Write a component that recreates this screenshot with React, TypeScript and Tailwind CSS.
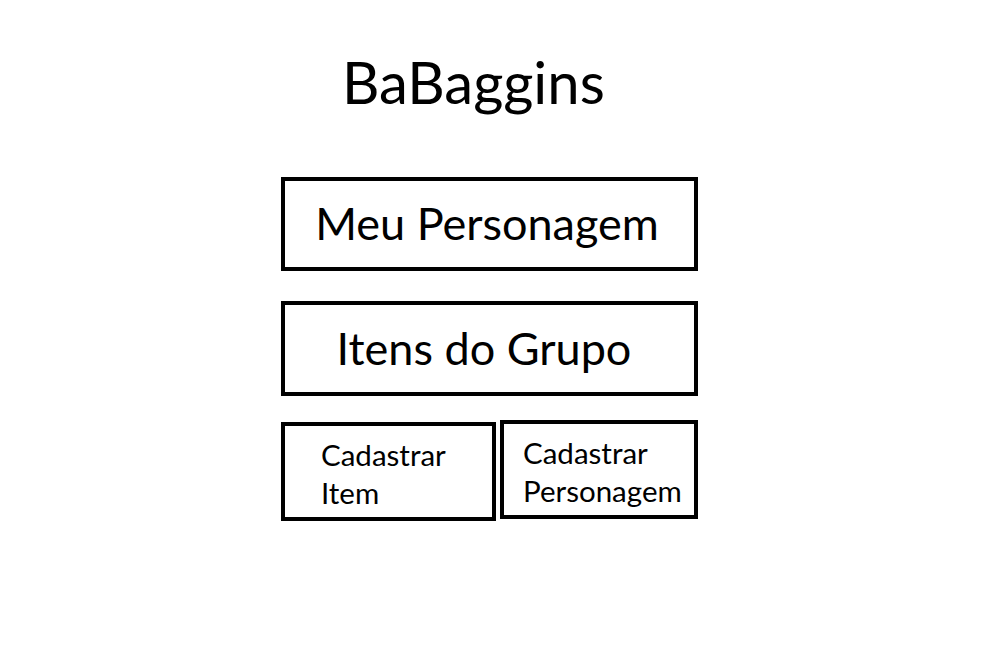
const App = () => {
  return (
    <div className="w-[1008px] h-[651px] bg-white text-black" style={{ fontFamily: 'Lato, "Open Sans", sans-serif' }}>
      <div className="pl-[281px] pt-[50px] w-[698px]">
        <h1 className="text-[58px] leading-[64px] pl-[61px] h-[127px]">BaBaggins</h1>
        <div className="flex flex-col gap-[30px]">
          <button className="w-[417px] h-[94px] border-4 border-black flex items-center justify-center pr-[5px] text-[45px]">
            Meu Personagem
          </button>
          <button className="w-[417px] h-[95px] border-4 border-black flex items-center justify-center pr-[11px] text-[45px]">
            Itens do Grupo
          </button>
        </div>
        <div className="flex items-start gap-[4px] mt-[24px]">
          <button className="w-[215px] h-[99px] mt-[2px] border-4 border-black text-left pl-[36px] pt-[10px] text-[29.5px] leading-[38px] flex flex-col items-start justify-start">
            <span>Cadastrar</span>
            <span>Item</span>
          </button>
          <button className="w-[198px] h-[99px] border-4 border-black text-left pl-[19px] pt-[10px] text-[29.5px] leading-[38px] flex flex-col items-start justify-start">
            <span>Cadastrar</span>
            <span>Personagem</span>
          </button>
        </div>
      </div>
    </div>
  );
};

export default App;
